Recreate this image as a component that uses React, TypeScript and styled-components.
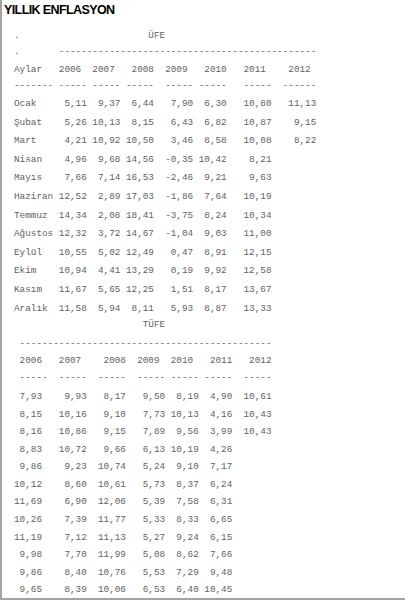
import React from 'react'
import styled, { createGlobalStyle } from 'styled-components'

const GlobalStyle = createGlobalStyle`
  html, body {
    margin: 0;
    padding: 0;
    background: #fff;
  }
  body {
    width: 405px;
    height: 602px;
    overflow: hidden;
  }
`

const Frame = styled.div`
  box-sizing: border-box;
  width: 100%;
  height: 600px;
  border-left: 2px solid #a3a3a3;
  border-bottom: 2px solid #a3a3a3;
  padding: 3px 0 0 2px;
`

const Title = styled.h1`
  margin: 0;
  font-family: 'Liberation Sans', Arial, sans-serif;
  font-size: 12.5px;
  line-height: 15px;
  font-weight: bold;
  letter-spacing: -0.6px;
  color: #000;
`

const Listing = styled.div<{ $top: number }>`
  margin-top: ${(p) => p.$top}px;
  padding-left: 10px;
  font-family: 'Liberation Mono', 'Courier New', monospace;
  font-size: 9.33px;
  color: #626262;
`

const Line = styled.div<{ $h: number }>`
  height: ${(p) => p.$h}px;
  line-height: 12px;
  white-space: pre;
`

type Cell = [string, number, ('r' | undefined)?]

// lays tokens out on a fixed character grid, like the original plain-text table
function row(cells: Cell[]): string {
  const chars: string[] = Array(60).fill(' ')
  cells.forEach(([text, col, align]) => {
    const glyphs = Array.from(text)
    const start = align === 'r' ? col - glyphs.length + 1 : col
    glyphs.forEach((g, i) => {
      chars[start + i] = g
    })
  })
  return chars.join('').replace(/\s+$/, '')
}

const dash = (n: number) => '-'.repeat(n)

const ufeRows: [string, string[]][] = [
  ['Ocak', ['5,11', '9,37', '6,44', '7,90', '6,30', '10,80', '11,13']],
  ['Şubat', ['5,26', '10,13', '8,15', '6,43', '6,82', '10,87', '9,15']],
  ['Mart', ['4,21', '10,92', '10,50', '3,46', '8,58', '10,08', '8,22']],
  ['Nisan', ['4,96', '9,68', '14,56', '-0,35', '10,42', '8,21']],
  ['Mayıs', ['7,66', '7,14', '16,53', '-2,46', '9,21', '9,63']],
  ['Haziran', ['12,52', '2,89', '17,03', '-1,86', '7,64', '10,19']],
  ['Temmuz', ['14,34', '2,08', '18,41', '-3,75', '8,24', '10,34']],
  ['Ağustos', ['12,32', '3,72', '14,67', '-1,04', '9,03', '11,00']],
  ['Eylül', ['10,55', '5,02', '12,49', '0,47', '8,91', '12,15']],
  ['Ekim', ['10,94', '4,41', '13,29', '0,19', '9,92', '12,58']],
  ['Kasım', ['11,67', '5,65', '12,25', '1,51', '8,17', '13,67']],
  ['Aralık', ['11,58', '5,94', '8,11', '5,93', '8,87', '13,33']],
]

const tufeRows: string[][] = [
  ['7,93', '9,93', '8,17', '9,50', '8,19', '4,90', '10,61'],
  ['8,15', '10,16', '9,10', '7,73', '10,13', '4,16', '10,43'],
  ['8,16', '10,86', '9,15', '7,89', '9,56', '3,99', '10,43'],
  ['8,83', '10,72', '9,66', '6,13', '10,19', '4,26'],
  ['9,86', '9,23', '10,74', '5,24', '9,10', '7,17'],
  ['10,12', '8,60', '10,61', '5,73', '8,37', '6,24'],
  ['11,69', '6,90', '12,06', '5,39', '7,58', '6,31'],
  ['10,26', '7,39', '11,77', '5,33', '8,33', '6,65'],
  ['11,19', '7,12', '11,13', '5,27', '9,24', '6,15'],
  ['9,98', '7,70', '11,99', '5,08', '8,62', '7,66'],
  ['9,86', '8,40', '10,76', '5,53', '7,29', '9,48'],
  ['9,65', '8,39', '10,06', '6,53', '6,40', '10,45'],
]

const ufeEnds = [12, 18, 24, 31, 37, 45, 53]
const tufeEnds = [4, 12, 19, 26, 32, 38, 45]

const ufeLines: string[] = [
  row([['.', 0], ['ÜFE', 24]]),
  row([['.', 0], [dash(46), 8]]),
  row([
    ['Aylar', 0], ['2006', 8], ['2007', 14], ['2008', 21],
    ['2009', 27], ['2010', 34], ['2011', 41], ['2012', 49],
  ]),
  row([
    [dash(7), 0], [dash(5), 8], [dash(5), 14], [dash(5), 20],
    [dash(5), 27], [dash(5), 33], [dash(5), 41], [dash(6), 48],
  ]),
  ...ufeRows.map(([month, vals]) =>
    row([[month, 0], ...vals.map((v, i): Cell => [v, ufeEnds[i], 'r'])])
  ),
]

const tufeLines: string[] = [
  row([['TÜFE', 23]]),
  row([[dash(45), 1]]),
  row([
    ['2006', 1], ['2007', 8], ['2008', 16], ['2009', 22],
    ['2010', 28], ['2011', 35], ['2012', 42],
  ]),
  row([
    [dash(5), 1], [dash(5), 8], [dash(5), 15], [dash(5), 22],
    [dash(5), 28], [dash(5), 34], [dash(5), 41],
  ]),
  ...tufeRows.map((vals) => row(vals.map((v, i): Cell => [v, tufeEnds[i], 'r']))),
]

// vertical centre of each text line, in page pixels
const ufeCentres = [36, 52, 70, 86, ...ufeRows.map((_, i) => 104 + i * 18.6)]
const tufeCentres = [325, 344, 361, 378, ...tufeRows.map((_, i) => 397 + i * 17.6)]

function Block({ lines, centres, top }: { lines: string[]; centres: number[]; top: number }) {
  return (
    <Listing $top={top}>
      {lines.map((text, i) => (
        <Line key={i} $h={i < centres.length - 1 ? centres[i + 1] - centres[i] : 12}>
          {text || ' '}
        </Line>
      ))}
    </Listing>
  )
}

export default function App() {
  const lastUfe = ufeCentres[ufeCentres.length - 1]
  return (
    <>
      <GlobalStyle />
      <Frame>
        <Title>YILLIK ENFLASYON</Title>
        <Block lines={ufeLines} centres={ufeCentres} top={ufeCentres[0] - 6 - 18} />
        <Block lines={tufeLines} centres={tufeCentres} top={tufeCentres[0] - 6 - (lastUfe + 6)} />
      </Frame>
    </>
  )
}
